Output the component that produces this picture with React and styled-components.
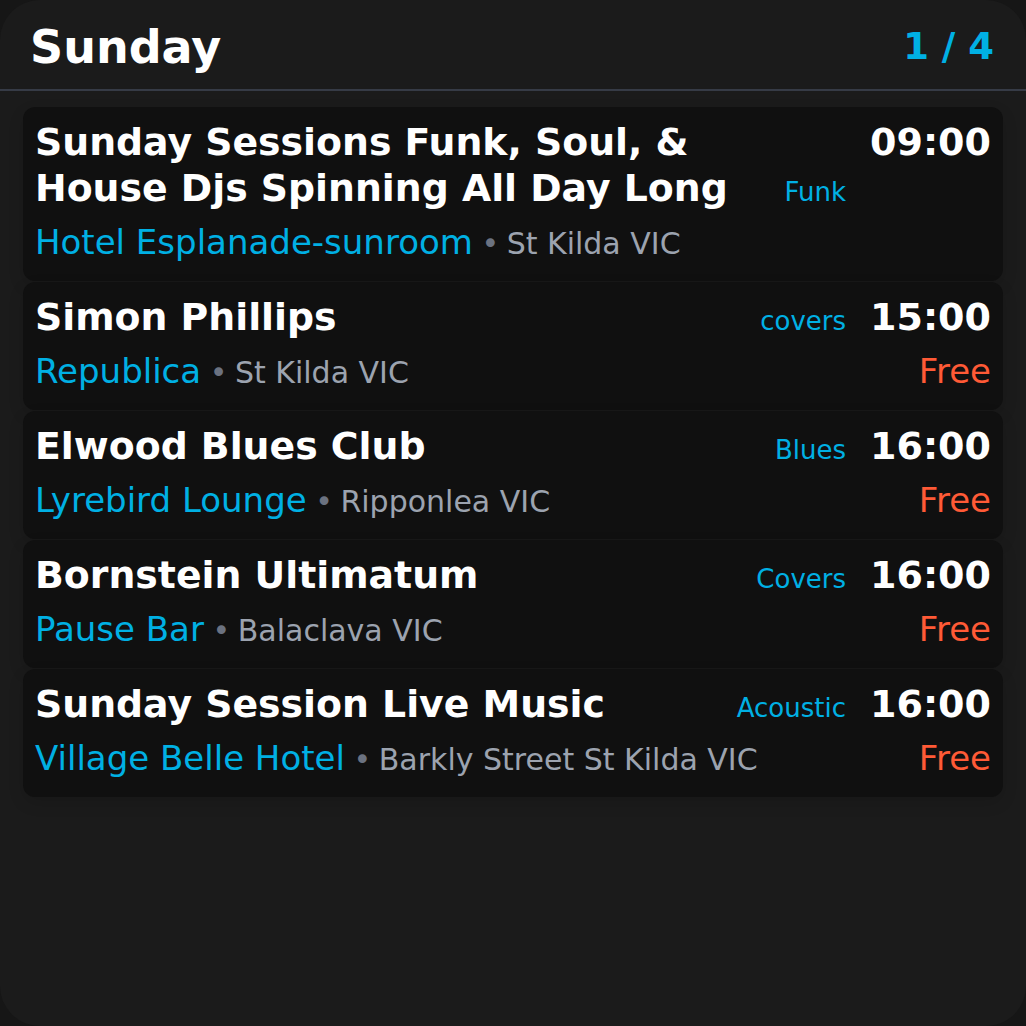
import React from 'react';
import styled, { createGlobalStyle } from 'styled-components';

const events = [
  {
    title: 'Sunday Sessions Funk, Soul, & House Djs Spinning All Day Long',
    genre: 'Funk',
    time: '09:00',
    venue: 'Hotel Esplanade-sunroom',
    location: 'St Kilda VIC',
  },
  {
    title: 'Simon Phillips',
    genre: 'covers',
    time: '15:00',
    venue: 'Republica',
    location: 'St Kilda VIC',
    price: 'Free',
  },
  {
    title: 'Elwood Blues Club',
    genre: 'Blues',
    time: '16:00',
    venue: 'Lyrebird Lounge',
    location: 'Ripponlea VIC',
    price: 'Free',
  },
  {
    title: 'Bornstein Ultimatum',
    genre: 'Covers',
    time: '16:00',
    venue: 'Pause Bar',
    location: 'Balaclava VIC',
    price: 'Free',
  },
  {
    title: 'Sunday Session Live Music',
    genre: 'Acoustic',
    time: '16:00',
    venue: 'Village Belle Hotel',
    location: 'Barkly Street St Kilda VIC',
    price: 'Free',
  },
];

function App() {
  return (
    <>
      <GlobalStyle />
      <StyledPanel>
        <StyledHeader>
          <StyledHeaderTitle>Sunday</StyledHeaderTitle>
          <StyledPageCount>1 / 4</StyledPageCount>
        </StyledHeader>
        <StyledList>
          {events.map((ev, i) => (
            <StyledCard key={i}>
              <StyledCardMain>
                <StyledTitleRow>
                  <StyledTitle>{ev.title}</StyledTitle>
                  <StyledGenre>{ev.genre}</StyledGenre>
                </StyledTitleRow>
                <StyledVenueLine>
                  <StyledVenue>{ev.venue}</StyledVenue>
                  <StyledLocation>
                    <StyledDot> • </StyledDot>
                    {ev.location}
                  </StyledLocation>
                </StyledVenueLine>
              </StyledCardMain>
              <StyledCardSide>
                <StyledTime>{ev.time}</StyledTime>
                {ev.price && <StyledPrice>{ev.price}</StyledPrice>}
              </StyledCardSide>
            </StyledCard>
          ))}
        </StyledList>
      </StyledPanel>
    </>
  );
}

const GlobalStyle = createGlobalStyle`
  * { box-sizing: border-box; }
  html, body {
    margin: 0;
    padding: 0;
    background: #161616;
    font-family: 'DejaVu Sans', 'Liberation Sans', sans-serif;
  }
`;

const StyledPanel = styled.div`
  width: 1026px;
  height: 1026px;
  background: #1b1b1b;
  border-radius: 40px;
  overflow: hidden;
`;

const StyledHeader = styled.div`
  display: flex;
  align-items: center;
  justify-content: space-between;
  height: 91px;
  padding: 4px 32px 0 30px;
  border-bottom: 2px solid #363b46;
`;

const StyledHeaderTitle = styled.h1`
  margin: 0;
  font-size: 46px;
  font-weight: 700;
  color: #ffffff;
  line-height: 1;
`;

const StyledPageCount = styled.div`
  font-size: 37px;
  font-weight: 700;
  color: #00b0e4;
  line-height: 1;
`;

const StyledList = styled.div`
  display: flex;
  flex-direction: column;
  gap: 1px;
  padding: 16px 23px;
`;

const StyledCard = styled.div`
  display: flex;
  gap: 24px;
  padding: 12px 12px 17px 12px;
  background: #101010;
  border-radius: 12px;
  box-shadow: 0 6px 16px rgba(0, 0, 0, 0.12);
`;

const StyledCardMain = styled.div`
  flex: 1;
  min-width: 0;
  display: flex;
  flex-direction: column;
  gap: 11px;
`;

const StyledTitleRow = styled.div`
  display: flex;
  align-items: last baseline;
  gap: 16px;
`;

const StyledTitle = styled.div`
  flex: 1;
  font-size: 37.8px;
  font-weight: 700;
  line-height: 46px;
  color: #ffffff;
`;

const StyledGenre = styled.div`
  flex-shrink: 0;
  font-size: 26px;
  color: #00b0e4;
`;

const StyledVenueLine = styled.div`
  font-size: 34px;
  line-height: 40px;
  white-space: nowrap;
`;

const StyledVenue = styled.span`
  color: #00b0e4;
`;

const StyledLocation = styled.span`
  font-size: 30px;
  color: #9ca3af;
`;

const StyledDot = styled.span`
  color: #6b7280;
  margin-left: -1px;
  margin-right: -2px;
`;

const StyledCardSide = styled.div`
  display: flex;
  flex-direction: column;
  align-items: flex-end;
  gap: 11px;
`;

const StyledTime = styled.div`
  font-size: 38px;
  font-weight: 700;
  line-height: 46px;
  color: #ffffff;
`;

const StyledPrice = styled.div`
  font-size: 34px;
  line-height: 40px;
  color: #ff5a36;
`;

export default App;
